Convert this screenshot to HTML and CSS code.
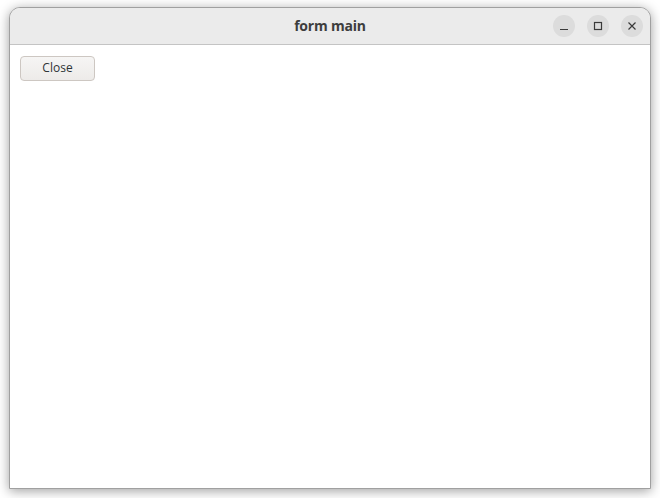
FILE: index.html
```html
<!DOCTYPE html>
<html>
<head>
<meta charset="utf-8">
<link rel="stylesheet" href="styles.css">
</head>
<body>
<div class="window">
  <div class="titlebar">
    <div class="title">form main</div>
    <div class="controls">
      <span class="ctl"><svg width="10" height="10" viewBox="0 0 10 10"><path d="M1 8.5h8" stroke="#3a3a3a" stroke-width="1.2"/></svg></span>
      <span class="ctl"><svg width="10" height="10" viewBox="0 0 10 10"><rect x="1.5" y="1.5" width="7" height="7" fill="none" stroke="#3a3a3a" stroke-width="1.2"/></svg></span>
      <span class="ctl"><svg width="10" height="10" viewBox="0 0 10 10"><path d="M1.5 1.5l7 7M8.5 1.5l-7 7" stroke="#3a3a3a" stroke-width="1.2"/></svg></span>
    </div>
  </div>
  <div class="content">
    <button class="btn">Close</button>
  </div>
</div>
</body>
</html>
```
FILE: styles.css
```css
html, body {
  margin: 0;
  padding: 0;
  background: #ffffff;
}
body {
  padding: 7px 9px 9px 9px;
  width: 660px;
  height: 498px;
  box-sizing: border-box;
  font-family: "Open Sans", "DejaVu Sans", sans-serif;
}
.window {
  width: 642px;
  height: 482px;
  box-sizing: border-box;
  border: 1px solid #a0a0a0;
  border-radius: 11px 11px 0 0;
  background: #ffffff;
  box-shadow: 0 2px 12px rgba(0,0,0,0.38);
  display: flex;
  flex-direction: column;
  overflow: hidden;
}
.titlebar {
  height: 37px;
  flex: none;
  box-sizing: border-box;
  background: #ebebeb;
  border-bottom: 1px solid #c4c4c4;
  display: flex;
  align-items: center;
  justify-content: center;
  position: relative;
}
.title {
  font-weight: bold;
  font-size: 14px;
  letter-spacing: -0.2px;
  color: #3d3d3d;
  margin-top: -1px;
}
.controls {
  position: absolute;
  right: 7px;
  top: 7px;
  display: flex;
  gap: 12px;
}
.ctl {
  width: 22px;
  height: 22px;
  border-radius: 50%;
  background: #dcdcdc;
  display: flex;
  align-items: center;
  justify-content: center;
}
.content {
  flex: 1;
  padding: 10px 10px;
}
.btn {
  width: 75px;
  height: 25px;
  box-sizing: border-box;
  border: 1px solid #cdc7c2;
  border-radius: 4px;
  background: linear-gradient(#f6f5f4, #edebe9);
  font-family: "Open Sans", "DejaVu Sans", sans-serif;
  font-size: 12px;
  color: #2e3436;
  padding: 0 0 1px 0;
  margin: 0;
}
```
